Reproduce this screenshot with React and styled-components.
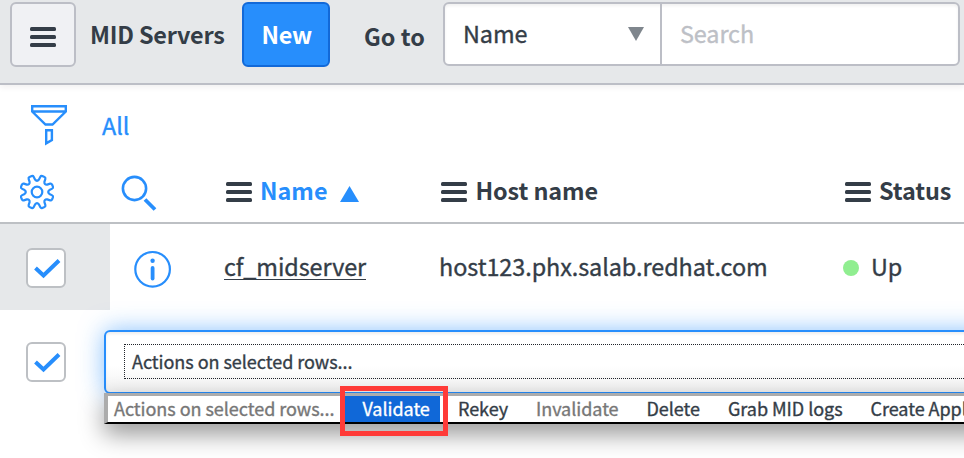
import React from "react";
import styled, { createGlobalStyle } from "styled-components";

const ink = "#343d47";
const blue = "#278efc";
const line = "#bdc0c4";

const GlobalStyle = createGlobalStyle`
  * { box-sizing: border-box; }
  body {
    margin: 0;
    background: #fff;
    color: ${ink};
    font-family: "Noto Sans CJK SC", "Noto Sans", sans-serif;
    overflow: hidden;
  }
`;

const Page = styled.main`
  width: 964px;
  height: 458px;
  overflow: hidden;
  background: #fff;
`;

const Text = styled.span`
  display: block;
  flex: none;
  width: ${(p) => p.$w}px;
  margin-left: ${(p) => p.$ml || 0}px;
  margin-top: ${(p) => p.$mt || 0}px;
  font-size: ${(p) => p.$size || 23.4}px;
  font-weight: ${(p) => (p.$bold ? 700 : 400)};
  line-height: 34px;
  letter-spacing: ${(p) => p.$ls || 0}px;
  -webkit-text-stroke: ${(p) => (p.$bold ? 0 : 0.35)}px currentColor;
  color: ${(p) => p.$color || "inherit"};
  white-space: nowrap;
`;

const Header = styled.header`
  display: flex;
  align-items: flex-start;
  height: 85px;
  padding: 2px 4px 0 10px;
  background: #e6e8ea;
  border-bottom: 2px solid #bcbec6;
  box-shadow: 0 2px 6px rgba(60, 40, 50, 0.08);
`;

const Button = styled.button`
  display: flex;
  flex: none;
  align-items: center;
  justify-content: center;
  width: ${(p) => p.$w}px;
  height: 65px;
  margin: 0 0 0 ${(p) => p.$ml || 0}px;
  padding: 0;
  font: inherit;
  border: 2px solid ${(p) => (p.$primary ? "#1269d8" : "#bcbec6")};
  border-radius: 6px;
  background: ${(p) => (p.$primary ? blue : "#f0f1f4")};
  color: ${(p) => (p.$primary ? "#fff" : ink)};
`;

const SearchGroup = styled.div`
  display: flex;
  flex: none;
  width: 517px;
  height: 64px;
  margin-left: 17px;
  border: 2px solid #bcbec6;
  border-radius: 6px;
  background: #fff;
  box-shadow: inset 0 2px 3px rgba(0, 0, 0, 0.06);
`;

const FieldSelect = styled.div`
  display: flex;
  align-items: flex-start;
  width: 217px;
  padding: 12px 0 0 18px;
  border-right: 2px solid #bcbec6;
`;

const SearchField = styled.div`
  flex: 1;
  padding: 12px 0 0 18px;
`;

const FilterBar = styled.div`
  display: flex;
  align-items: flex-start;
  height: 80px;
  padding: 19px 0 0 30px;
`;

const Columns = styled.div`
  display: flex;
  align-items: flex-start;
  height: 59px;
  padding: 10px 0 0 19px;
  border-bottom: 2px solid ${line};
`;

const Row = styled.div`
  display: flex;
  align-items: flex-start;
  height: 86px;
`;

const CheckCell = styled.div`
  flex: none;
  width: ${(p) => (p.$shaded ? 110 : 104)}px;
  height: ${(p) => (p.$shaded ? 86 : 148)}px;
  padding: ${(p) => (p.$shaded ? 24 : 32)}px 0 0 26px;
  background: ${(p) => (p.$shaded ? "#e6e8ea" : "transparent")};
`;

const Box = styled.div`
  width: 40px;
  height: 40px;
  border: 2px solid ${line};
  border-radius: 6px;
  background: #fff;
`;

const Icon = styled.svg`
  display: block;
  flex: none;
  margin-left: ${(p) => p.$ml || 0}px;
  margin-top: ${(p) => p.$mt || 0}px;
  overflow: visible;
`;

const RecordLink = styled(Text)`
  height: 31px;
  border-bottom: 1px solid ${ink};
`;

const StatusDot = styled.span`
  flex: none;
  width: 16px;
  height: 16px;
  margin: 36px 0 0 74px;
  border-radius: 50%;
  background: #90ee90;
`;

const Footer = styled.footer`
  display: flex;
  height: 148px;
`;

const ActionArea = styled.div`
  flex: none;
  width: 900px;
  padding-top: 20px;
`;

const ActionSelect = styled.div`
  height: 64px;
  padding: 12px 18px;
  border: 2px solid ${blue};
  border-radius: 6px;
  background: linear-gradient(#fff 55%, #f2f2f2);
  box-shadow: 0 0 24px rgba(39, 142, 252, 0.55), inset 0 2px 3px rgba(0, 0, 0, 0.07);
`;

const FocusFrame = styled.div`
  display: flex;
  align-items: flex-start;
  height: 35px;
  padding-left: 7px;
  border: 1px dotted #20242a;
`;

const Menu = styled.div`
  position: relative;
  display: flex;
  height: 31px;
  margin-top: -1px;
  border-top: 3px solid #acacac;
  border-bottom: 2px solid #000;
  border-left: 4px solid #acacac;
  background: #fff;
  box-shadow: 0 10px 24px rgba(0, 0, 0, 0.42);
`;

const MenuItem = styled.div`
  display: flex;
  align-items: flex-start;
  flex: none;
  width: ${(p) => p.$w}px;
  height: 26px;
  padding-left: ${(p) => p.$pl}px;
  background: ${(p) => (p.$active ? "#1068d8" : "transparent")};
  color: ${(p) => (p.$active ? "#fff" : p.$disabled ? "#777" : ink)};
`;

const Highlight = styled.div`
  position: absolute;
  left: 232px;
  top: -10px;
  width: 108px;
  height: 50px;
  border: 5px solid #ff3b38;
`;

const Bars = ({ ml, mt }) => (
  <Icon $ml={ml} $mt={mt} width="26" height="20" fill={ink}>
    <rect width="26" height="4" rx="1.5" />
    <rect y="8" width="26" height="4" rx="1.5" />
    <rect y="16" width="26" height="4" rx="1.5" />
  </Icon>
);

const Checkbox = () => (
  <Box>
    <Icon width="36" height="36" fill="none" stroke={blue} strokeWidth="4">
      <path d="M7.5 18 L15.5 25.5 L31 10.5" />
    </Icon>
  </Box>
);

const Funnel = () => (
  <Icon $ml={1} width="37" height="42" fill="none" stroke={blue} strokeWidth="2.4">
    <path d="M1.2 2.2H34.8V7.5L21.5 20.5H14.5L1.2 7.5Z M1.2 7.5H34.8" />
    <path d="M15.2 26.2H20.9V36L15.2 39.4Z" />
  </Icon>
);

/* Eight teeth, rounded at the tip and in the valley between them. */
const gearPath = (() => {
  const at = (deg, r) => {
    const a = (deg * Math.PI) / 180;
    return `${(18 + r * Math.cos(a)).toFixed(2)} ${(18 + r * Math.sin(a)).toFixed(2)}`;
  };
  let d = `M${at(9, 12.6)}`;
  for (let i = 0; i < 8; i++) {
    const mid = 22.5 + i * 45;
    d += `L${at(mid - 10, 15.6)}Q${at(mid - 9, 16.8)} ${at(mid - 4, 16.8)}`;
    d += `L${at(mid + 4, 16.8)}Q${at(mid + 9, 16.8)} ${at(mid + 10, 15.6)}`;
    d += `L${at(mid + 13.5, 12.6)}Q${at(mid + 22.5, 10)} ${at(mid + 31.5, 12.6)}`;
  }
  return `${d}Z`;
})();

const Gear = () => (
  <Icon $mt={-1} width="36" height="36" fill="none" stroke={blue} strokeWidth="2.2" strokeLinejoin="round">
    <path d={gearPath} />
    <circle cx="18" cy="18" r="5.3" />
  </Icon>
);

const Magnifier = () => (
  <Icon $ml={66} width="36" height="36" fill="none" stroke={blue} strokeWidth="2.6">
    <circle cx="13.5" cy="13.5" r="11.6" />
    <path d="M24 24.5L34 34.5" strokeWidth="3.8" />
  </Icon>
);

const Info = () => (
  <Icon $ml={24} $mt={27} width="37" height="37" fill="none" stroke={blue}>
    <circle cx="18.6" cy="18.3" r="17.3" strokeWidth="2.2" />
    <circle cx="18.6" cy="9.8" r="2.2" fill={blue} stroke="none" />
    <path d="M18.6 17V27.5" strokeWidth="3.8" strokeLinecap="round" />
  </Icon>
);

const menuItems = [
  { label: "Actions on selected rows...", w: 237, pl: 6, disabled: true },
  { label: "Validate", w: 95, pl: 17.5, active: true },
  { label: "Rekey", w: 78, pl: 18 },
  { label: "Invalidate", w: 110, pl: 18, disabled: true },
  { label: "Delete", w: 83, pl: 18.5 },
  { label: "Grab MID logs", w: 142, pl: 17 },
  { label: "Create Application", w: 180, pl: 17.5 },
];

export default function App() {
  return (
    <Page>
      <GlobalStyle />
      <Header>
        <Button $w={66}><Bars mt={4} /></Button>
        <Text $bold $w={152} $ml={14} $mt={15} $ls={-0.2}>MID Servers</Text>
        <Button $primary $w={88}><Text $bold $w={49} $mt={-2} $ls={-0.2}>New</Text></Button>
        <Text $bold $w={62} $ml={34} $mt={17}>Go to</Text>
        <SearchGroup>
          <FieldSelect>
            <Text $w={165} $ls={-0.1}>Name</Text>
            <Icon $mt={11} width="16" height="14" fill="#7f868d"><path d="M0 0H16L8 14Z" /></Icon>
          </FieldSelect>
          <SearchField><Text $color="#bdc0c6" $ls={-0.1}>Search</Text></SearchField>
        </SearchGroup>
      </Header>
      <FilterBar>
        <Funnel />
        <Text $w={60} $ml={34} $mt={4} $color={blue}>All</Text>
      </FilterBar>
      <Columns>
        <Gear />
        <Magnifier />
        <Bars ml={69} mt={7} />
        <Text $bold $w={79} $ml={8} $mt={-2} $color={blue}>Name</Text>
        <Icon $ml={1} $mt={10.5} width="19" height="16" fill={blue}><path d="M0 16L9.5 0L19 16Z" /></Icon>
        <Bars ml={82} mt={7} />
        <Text $bold $w={369.5} $ml={8.5} $mt={-2} $ls={-0.1}>Host name</Text>
        <Bars mt={7} />
        <Text $bold $w={90} $ml={8} $mt={-2} $ls={-0.1}>Status</Text>
      </Columns>
      <Row>
        <CheckCell $shaded><Checkbox /></CheckCell>
        <Info />
        <RecordLink $w={142} $ml={53} $mt={25} $ls={-0.08}>cf_midserver</RecordLink>
        <Text $w={330} $ml={73} $mt={25} $ls={-0.05}>host123.phx.salab.redhat.com</Text>
        <StatusDot />
        <Text $w={60} $ml={12} $mt={25}>Up</Text>
      </Row>
      <Footer>
        <CheckCell><Checkbox /></CheckCell>
        <ActionArea>
          <ActionSelect>
            <FocusFrame><Text $size={18} $mt={-1} $ls={-0.04}>Actions on selected rows...</Text></FocusFrame>
          </ActionSelect>
          <Menu>
            {menuItems.map((item) => (
              <MenuItem key={item.label} $w={item.w} $pl={item.pl} $active={item.active} $disabled={item.disabled}>
                <Text $size={18} $mt={-5} $ls={-0.04}>{item.label}</Text>
              </MenuItem>
            ))}
            <Highlight />
          </Menu>
        </ActionArea>
      </Footer>
    </Page>
  );
}
